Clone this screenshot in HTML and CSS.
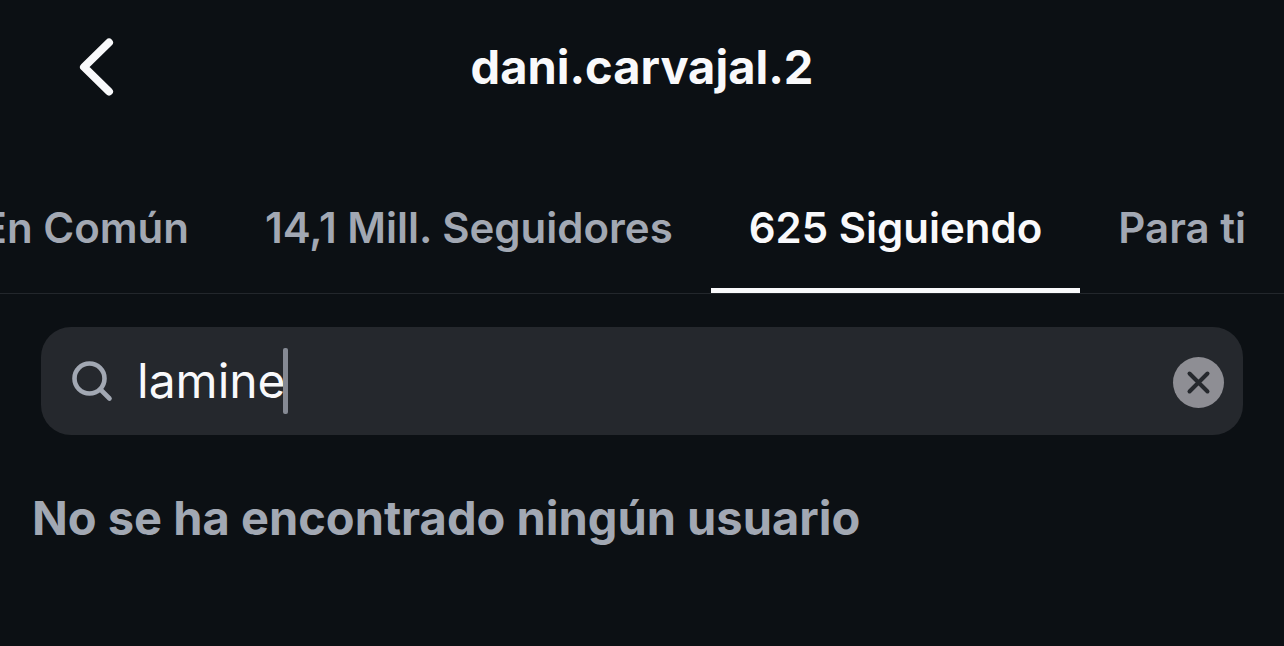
FILE: index.html
```html
<!DOCTYPE html>
<html lang="es">
<head>
<meta charset="utf-8">
<meta name="viewport" content="width=device-width, initial-scale=1">
<title>dani.carvajal.2</title>
<link rel="stylesheet" href="styles.css">
</head>
<body>
<header class="header">
  <button class="back" type="button" aria-label="Atrás">
    <svg width="40" height="64" viewBox="0 0 40 64" fill="none" stroke="currentColor" stroke-width="8" stroke-linecap="round" stroke-linejoin="round"><path d="M33 7.500 8 32l25 24.500"/></svg>
  </button>
  <h1 class="title">dani.carvajal.2</h1>
</header>
<nav class="tabs">
  <a class="tab" href="#comun">En Común</a>
  <a class="tab" href="#seguidores">14,1 Mill. Seguidores</a>
  <a class="tab active" href="#siguiendo" aria-current="page">625 Siguiendo</a>
  <a class="tab" href="#parati">Para ti</a>
</nav>
<main class="content">
  <form class="search">
    <svg class="glass" width="44" height="44" viewBox="0 0 44 44" fill="none" stroke="currentColor" stroke-width="4.600" stroke-linecap="round"><circle cx="18.500" cy="19.500" r="15"/><path d="M29.500 30.500l9 9"/></svg>
    <div class="field">
      <input class="query" type="text" value="lamine" size="6" aria-label="Buscar">
      <span class="caret"></span>
    </div>
    <button class="clear" type="reset" aria-label="Borrar">
      <svg width="51" height="51" viewBox="0 0 51 51" fill="none" stroke="currentColor" stroke-width="4" stroke-linecap="round"><path d="M16.500 16.500l18 18M34.500 16.500l-18 18"/></svg>
    </button>
  </form>
  <p class="empty">No se ha encontrado ningún usuario</p>
</main>
</body>
</html>
```
FILE: styles.css
```css
* { box-sizing: border-box; }
body {
  margin: 0;
  min-height: 100vh;
  overflow-x: hidden;
  background: #0c1014;
  color: #f9f9fb;
  font-family: Inter, "Liberation Sans", sans-serif;
}
button { padding: 0; border: 0; background: none; color: inherit; }
svg { display: block; }
.header {
  display: grid;
  grid-template-columns: 1fr auto 1fr;
  align-items: center;
  height: 134px;
  padding: 0 76px;
}
.back { justify-self: start; }
.title { margin: 0; font-size: 47px; line-height: 60px; font-weight: 700; }
.tabs {
  display: flex;
  justify-content: flex-end;
  height: 160px;
  border-bottom: 1px solid #23272c;
  overflow: hidden;
}
.tab {
  flex: none;
  display: flex;
  align-items: center;
  padding: 33px 38px 0;
  border-bottom: 5px solid transparent;
  color: #a2a8b3;
  font-size: 42px;
  font-weight: 600;
  white-space: nowrap;
  text-decoration: none;
}
.active { color: #f9f9fb; border-color: #f9f9fb; }
.content { padding: 33px 41px; }
.search {
  display: flex;
  align-items: center;
  height: 108px;
  padding: 0 19px 0 30px;
  border-radius: 30px;
  background: #25282d;
}
.glass { flex: none; color: #a2a8b3; }
.field { flex: 1; display: flex; align-items: center; margin-left: 22px; }
.query {
  width: 148px;
  padding: 0;
  border: 0;
  outline: 0;
  background: none;
  color: inherit;
  font: 400 48px/60px Inter, "Liberation Sans", sans-serif;
}
.caret { width: 5px; height: 66px; margin-left: -2px; border-radius: 2px; background: #858993; }
.clear { margin-top: 2px; border-radius: 50%; background: #8e8e94; color: #25282d; }
.empty {
  margin: 53px -9px 0;
  color: #a2a8b3;
  font-size: 47px;
  line-height: 60px;
  font-weight: 700;
}
```
